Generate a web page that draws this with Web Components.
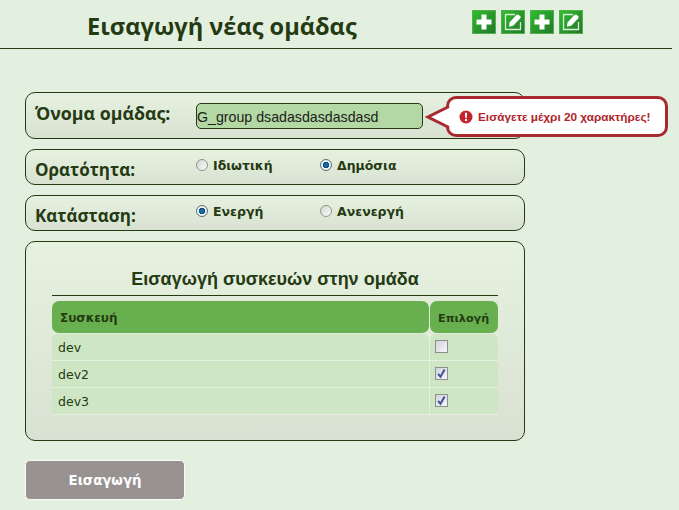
<!DOCTYPE html>
<html lang="el">
<head>
<meta charset="utf-8">
<title>Εισαγωγή νέας ομάδας</title>
<style>
    html, body { margin: 0; padding: 0; }
    body {
        width: 679px;
        height: 510px;
        overflow: hidden;
        background: #e4f0df;
        color: #243a12;
        font-family: "DejaVu Sans", sans-serif;
    }
    form-page { display: block; }
</style>
</head>
<body>
<form-page>
    <page-header title="Εισαγωγή νέας ομάδας"></page-header>

    <form-row label="Όνομα ομάδας:" name-row>
        <text-field value="G_group dsadasdasdasdasd"></text-field>
        <error-bubble text="Εισάγετε μέχρι 20 χαρακτήρες!"></error-bubble>
    </form-row>
    <form-row label="Ορατότητα:">
        <radio-option text="Ιδιωτική"></radio-option>
        <radio-option text="Δημόσια" checked></radio-option>
    </form-row>
    <form-row label="Κατάσταση:">
        <radio-option text="Ενεργή" checked></radio-option>
        <radio-option text="Ανενεργή"></radio-option>
    </form-row>

    <device-panel title="Εισαγωγή συσκευών στην ομάδα">
        <device-row name="dev"></device-row>
        <device-row name="dev2" checked></device-row>
        <device-row name="dev3" checked></device-row>
    </device-panel>

    <submit-button text="Εισαγωγή"></submit-button>
</form-page>

<script>
const ICON_BG = `
    <defs><linearGradient id="g" x1="0" y1="0" x2="1" y2="1">
        <stop offset="0" stop-color="#2fbf2f"/><stop offset="1" stop-color="#24752a"/>
    </linearGradient></defs>
    <rect x="0.5" y="0.5" width="23" height="23" fill="url(#g)" stroke="#52b04a"/>`;

const ADD_ICON = `
    <svg viewBox="0 0 24 24" width="24" height="24">${ICON_BG}
        <path d="M9.5 4.5h5v5h5v5h-5v5h-5v-5h-5v-5h5z" fill="#fff"/>
    </svg>`;

const EDIT_ICON = `
    <svg viewBox="0 0 24 24" width="24" height="24">${ICON_BG}
        <path d="M14 4.5H4.5v15h15V12" fill="none" stroke="#d9eed5" stroke-width="1.3"/>
        <path d="M8.5 12.5l6.8-7.5c.8-.8 1.8-.8 2.6-.1l1.2 1.1c.7.7.7 1.6 0 2.4l-6.9 7.4-4.2 1z" fill="#fff"/>
    </svg>`;

class PageHeader extends HTMLElement {
    constructor() {
        super();
        this.attachShadow({ mode: 'open' });
        this.shadowRoot.innerHTML = `
            <style>
                :host {
                    display: flex;
                    width: 672px;
                    height: 48px;
                    border-bottom: 1px solid #243a12;
                    margin-bottom: 43px;
                }
                h1 {
                    margin: 0;
                    padding: 10px 0 0 87px;
                    width: 472px;
                    flex: none;
                    box-sizing: border-box;
                    font: bold 23.6px "Open Sans", sans-serif;
                    color: #243a12;
                    white-space: nowrap;
                }
                .icons { display: flex; gap: 5px; padding-top: 10px; height: 24px; }
                svg { display: block; }
            </style>
            <h1 id="title"></h1>
            <div class="icons">${ADD_ICON}${EDIT_ICON}${ADD_ICON}${EDIT_ICON}</div>
        `;
    }

    connectedCallback() {
        this.shadowRoot.getElementById('title').textContent = this.getAttribute('title');
    }
}

class FormRow extends HTMLElement {
    constructor() {
        super();
        this.attachShadow({ mode: 'open' });
        this.shadowRoot.innerHTML = `
            <style>
                :host {
                    display: flex;
                    position: relative;
                    box-sizing: border-box;
                    width: 500px;
                    height: 36px;
                    margin: 0 0 10px 25px;
                    padding-left: 9px;
                    border: 1px solid #243a12;
                    border-radius: 10px;
                    background: linear-gradient(#e6f1e0, #d9e2d2);
                }
                :host([name-row]) { height: 47px; }
                :host([name-row]) .label { padding-top: 8px; font-size: 17.8px; }
                .label {
                    width: 161px;
                    flex: none;
                    padding-top: 8px;
                    font: bold 17px "Open Sans", sans-serif;
                    color: #243a12;
                    white-space: nowrap;
                }
                .content { display: flex; }
            </style>
            <div class="label" id="label"></div>
            <div class="content"><slot></slot></div>
        `;
    }

    connectedCallback() {
        this.shadowRoot.getElementById('label').textContent = this.getAttribute('label');
    }
}

class TextField extends HTMLElement {
    constructor() {
        super();
        this.attachShadow({ mode: 'open' });
        this.shadowRoot.innerHTML = `
            <style>
                :host { display: block; padding-top: 10px; }
                input {
                    display: block;
                    box-sizing: border-box;
                    width: 227px;
                    height: 26px;
                    padding: 1px 0 0 0;
                    border: 1px solid #243a12;
                    border-radius: 5px;
                    background: #b4d8a3;
                    color: #1c1c1c;
                    font: 14.2px "Liberation Sans", sans-serif;
                    outline: none;
                }
            </style>
            <input id="field" type="text">
        `;
    }

    connectedCallback() {
        this.shadowRoot.getElementById('field').value = this.getAttribute('value') || '';
    }
}

class ErrorBubble extends HTMLElement {
    constructor() {
        super();
        this.attachShadow({ mode: 'open' });
        this.shadowRoot.innerHTML = `
            <style>
                :host {
                    position: absolute;
                    left: 420px;
                    top: 3px;
                    display: flex;
                    align-items: center;
                    box-sizing: border-box;
                    width: 222px;
                    height: 41px;
                    padding-left: 10px;
                    gap: 5px;
                    background: #fff;
                    border: 3px solid #a92a2e;
                    border-radius: 10px;
                    color: #b0252b;
                    font: bold 11.8px "Liberation Sans", sans-serif;
                    white-space: nowrap;
                }
                .tail { position: absolute; left: -24px; top: 5px; display: block; }
                .mark { display: block; flex: none; }
            </style>
            <svg class="tail" width="26" height="26" viewBox="0 0 26 26">
                <path d="M24 2.5L3 13l21 10.5" fill="#fff" stroke="#a92a2e" stroke-width="3"/>
            </svg>
            <svg class="mark" width="14" height="14" viewBox="0 0 14 14">
                <circle cx="7" cy="7" r="6.5" fill="#c3232b"/>
                <path d="M5.9 2.8h2.2l-.4 5.2H6.3z" fill="#fff"/>
                <circle cx="7" cy="10" r="1.2" fill="#fff"/>
            </svg>
            <span id="text"></span>
        `;
    }

    connectedCallback() {
        this.shadowRoot.getElementById('text').textContent = this.getAttribute('text');
    }
}

class RadioOption extends HTMLElement {
    constructor() {
        super();
        this.attachShadow({ mode: 'open' });
        this.shadowRoot.innerHTML = `
            <style>
                :host {
                    display: flex;
                    align-items: center;
                    gap: 5px;
                    width: 124px;
                    height: 16px;
                    padding-top: 7px;
                    font: bold 12.5px "DejaVu Sans", sans-serif;
                    color: #243a12;
                    white-space: nowrap;
                }
                .dot {
                    box-sizing: border-box;
                    width: 12px;
                    height: 12px;
                    flex: none;
                    border-radius: 50%;
                    border: 1px solid #8d968d;
                    background: linear-gradient(135deg, #d2d6d0, #fbfbfb);
                }
                :host([checked]) .dot {
                    background: radial-gradient(circle, #1a7ab8 0, #0f4f86 3px, #eef1f0 3.5px);
                    border-color: #5d6f7d;
                }
            </style>
            <span class="dot"></span><span id="text"></span>
        `;
    }

    connectedCallback() {
        this.shadowRoot.getElementById('text').textContent = this.getAttribute('text');
    }
}

class DevicePanel extends HTMLElement {
    constructor() {
        super();
        this.attachShadow({ mode: 'open' });
        this.shadowRoot.innerHTML = `
            <style>
                :host {
                    display: block;
                    box-sizing: border-box;
                    width: 500px;
                    height: 200px;
                    margin: 0 0 19px 25px;
                    padding: 26px 26px 0;
                    border: 1px solid #243a12;
                    border-radius: 10px;
                    background: linear-gradient(#e6f1e0, #d9e2d2);
                }
                h2 {
                    margin: 0;
                    height: 28px;
                    padding-top: 1px;
                    box-sizing: border-box;
                    border-bottom: 1px solid #243a12;
                    font: bold 18px "Liberation Sans", sans-serif;
                    text-align: center;
                    color: #243a12;
                    white-space: nowrap;
                }
                .head {
                    display: grid;
                    grid-template-columns: 377px 68px;
                    gap: 1px;
                    margin-top: 5px;
                    height: 32px;
                    font: bold 12px "DejaVu Sans", sans-serif;
                    color: #243a12;
                }
                .head div {
                    display: flex;
                    align-items: center;
                    padding: 2px 0 0 8px;
                    background: #68b04f;
                    border-radius: 7px;
                }
                .head div + div { font-size: 11.2px; }
            </style>
            <h2 id="title"></h2>
            <div class="head"><div>Συσκευή</div><div>Επιλογή</div></div>
            <slot></slot>
        `;
    }

    connectedCallback() {
        this.shadowRoot.getElementById('title').textContent = this.getAttribute('title');
    }
}

class DeviceRow extends HTMLElement {
    constructor() {
        super();
        this.attachShadow({ mode: 'open' });
        this.shadowRoot.innerHTML = `
            <style>
                :host {
                    display: grid;
                    grid-template-columns: 377px 68px;
                    gap: 1px;
                    margin-top: 1px;
                    height: 26px;
                    font: 12.5px "DejaVu Sans", sans-serif;
                    color: #243a12;
                    background: #e6f0e0;
                    box-shadow: 0 1px #e6f0e0;
                }
                div { display: flex; align-items: center; background: #cfe6c5; }
                #name { padding: 1px 0 0 6px; }
                .pick { padding-left: 5px; }
                :host(:first-child) div { border-radius: 5px 5px 0 0; }
                svg { display: block; margin-top: -1px; }
                .check { display: none; }
                :host([checked]) .check { display: block; }
            </style>
            <div id="name"></div>
            <div class="pick">
                <svg width="13" height="13" viewBox="0 0 13 13">
                    <defs><linearGradient id="c" x1="0" y1="0" x2="1" y2="1">
                        <stop offset="0" stop-color="#cfd2dc"/><stop offset="1" stop-color="#f8f8f8"/>
                    </linearGradient></defs>
                    <rect x="0.5" y="0.5" width="12" height="12" fill="url(#c)" stroke="#8f8f8f"/>
                    <path class="check" d="M3.2 6.8l2.3 3L9.6 2.4" fill="none" stroke="#3f4f9e" stroke-width="2"/>
                </svg>
            </div>
        `;
    }

    connectedCallback() {
        this.shadowRoot.getElementById('name').textContent = this.getAttribute('name');
    }
}

class SubmitButton extends HTMLElement {
    constructor() {
        super();
        this.attachShadow({ mode: 'open' });
        this.shadowRoot.innerHTML = `
            <style>
                :host { display: block; margin-left: 25px; width: 160px; }
                button {
                    display: block;
                    box-sizing: border-box;
                    width: 160px;
                    height: 40px;
                    padding: 0;
                    border: 1px solid #f8fbf6;
                    border-radius: 5px;
                    background: #989292;
                    color: #fff;
                    font: bold 13.3px "DejaVu Sans", sans-serif;
                }
            </style>
            <button id="btn" type="button"></button>
        `;
    }

    connectedCallback() {
        this.shadowRoot.getElementById('btn').textContent = this.getAttribute('text');
    }
}

customElements.define('page-header', PageHeader);
customElements.define('form-row', FormRow);
customElements.define('text-field', TextField);
customElements.define('error-bubble', ErrorBubble);
customElements.define('radio-option', RadioOption);
customElements.define('device-panel', DevicePanel);
customElements.define('device-row', DeviceRow);
customElements.define('submit-button', SubmitButton);
</script>
</body>
</html>
